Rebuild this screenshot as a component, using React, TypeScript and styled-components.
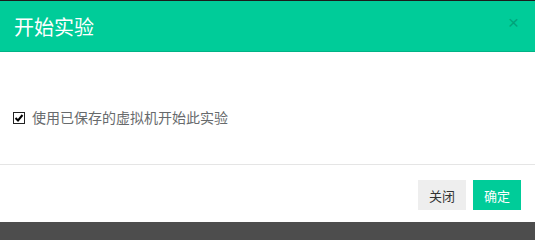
import React, { useState } from 'react';
import styled, { createGlobalStyle } from 'styled-components';

const GlobalStyle = createGlobalStyle`
    html, body {
        margin: 0;
        padding: 0;
        background: #4d4d4d;
    }
    body {
        font-family: "Liberation Sans", "Noto Sans CJK SC", sans-serif;
    }
`;

const Backdrop = styled.div`
    width: 535px;
    height: 226px;
    box-sizing: border-box;
    border-top: 1px solid #1c1c1c;
    border-bottom: 4px solid #4d4d4d;
    background: #4d4d4d;
`;

const Modal = styled.div`
    display: flex;
    flex-direction: column;
    height: 100%;
    background: #fff;
`;

const Header = styled.div`
    display: flex;
    align-items: center;
    justify-content: space-between;
    height: 51px;
    box-sizing: border-box;
    padding: 0 14px 0 14px;
    background: #00cc99;
    border-bottom: 1px solid #00b386;
`;

const Title = styled.h4`
    margin: 0;
    font-size: 20px;
    font-weight: normal;
    line-height: 24px;
    color: #fff;
    margin-top: 4px;
`;

const CloseButton = styled.button`
    border: none;
    background: transparent;
    padding: 0;
    margin-right: 2px;
    margin-top: -7px;
    cursor: pointer;
    font-size: 19px;
    line-height: 1;
    color: #000;
    opacity: 0.2;
    font-family: "Liberation Sans", sans-serif;
`;

const Body = styled.div`
    flex: 1;
    display: flex;
    align-items: flex-start;
    padding: 60px 13px 0 13px;
    border-bottom: 1px solid #e5e5e5;
`;

const CheckLabel = styled.label`
    display: flex;
    align-items: center;
    gap: 7px;
    font-size: 14px;
    line-height: 12px;
    color: #676a6c;
    cursor: pointer;
`;

const Box = styled.span`
    display: inline-flex;
    align-items: center;
    justify-content: center;
    width: 12px;
    height: 12px;
    box-sizing: border-box;
    border: 1px solid #222;
    background: #fff;
`;

const Footer = styled.div`
    display: flex;
    justify-content: flex-end;
    gap: 7px;
    height: 57px;
    box-sizing: border-box;
    padding: 15px 14px 0 0;
`;

const Button = styled.button<{ $primary?: boolean }>`
    height: 30px;
    padding: 0 11px;
    border: none;
    border-radius: 0;
    font-size: 13px;
    font-family: "Liberation Sans", "Noto Sans CJK SC", sans-serif;
    background: ${(p) => (p.$primary ? '#00cc99' : '#eeeeee')};
    color: ${(p) => (p.$primary ? '#fff' : '#333')};
    cursor: pointer;
`;

export default function App() {
    const [checked, setChecked] = useState(true);

    return (
        <>
            <GlobalStyle />
            <Backdrop>
                <Modal>
                    <Header>
                        <Title>开始实验</Title>
                        <CloseButton>×</CloseButton>
                    </Header>
                    <Body>
                        <CheckLabel onClick={() => setChecked(!checked)}>
                            <Box>
                                {checked && (
                                    <svg width="10" height="10" viewBox="0 0 10 10">
                                        <path d="M1.5 5 L4 7.5 L8.5 2" fill="none" stroke="#000" strokeWidth="2" />
                                    </svg>
                                )}
                            </Box>
                            使用已保存的虚拟机开始此实验
                        </CheckLabel>
                    </Body>
                    <Footer>
                        <Button>关闭</Button>
                        <Button $primary>确定</Button>
                    </Footer>
                </Modal>
            </Backdrop>
        </>
    );
}
